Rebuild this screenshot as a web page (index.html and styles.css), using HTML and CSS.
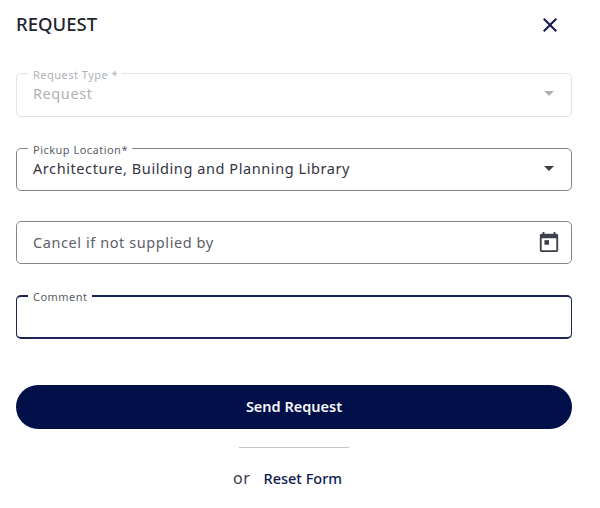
FILE: index.html
```html
<!DOCTYPE html>
<html lang="en">
<head>
<meta charset="utf-8">
<title>Request</title>
<link rel="stylesheet" href="styles.css">
</head>
<body>
<main class="panel">
  <header class="head">
    <h1 class="title">REQUEST</h1>
    <button class="close" aria-label="Close">
      <svg viewBox="0 0 24 24" width="24" height="24"><path d="M19 6.41 17.59 5 12 10.59 6.41 5 5 6.41 10.59 12 5 17.59 6.41 19 12 13.41 17.59 19 19 17.59 13.41 12z"/></svg>
    </button>
  </header>
  <form class="form">
    <fieldset class="field disabled">
      <legend class="label">Request Type *</legend>
      <div class="row"><span class="value">Request</span><span class="caret"></span></div>
    </fieldset>
    <fieldset class="field pickup">
      <legend class="label">Pickup Location*</legend>
      <div class="row"><span class="value">Architecture, Building and Planning Library</span><span class="caret"></span></div>
    </fieldset>
    <div class="field plain">
      <div class="row"><span class="value muted">Cancel if not supplied by</span>
        <svg class="cal" viewBox="0 0 24 24" width="24" height="24"><path d="M20 3h-1V1h-2v2H7V1H5v2H4c-1.1 0-2 .9-2 2v16c0 1.1.9 2 2 2h16c1.100 0 2-.9 2-2V5c0-1.100-.9-2-2-2zm0 18H4V8h16v13z"/><path d="M7 10h5v5H7z"/></svg>
      </div>
    </div>
    <fieldset class="field focus">
      <legend class="label">Comment</legend>
    </fieldset>
    <button type="button" class="send">Send Request</button>
  </form>
  <hr class="rule">
  <p class="alt"><span class="or">or</span><a class="reset">Reset Form</a></p>
</main>
</body>
</html>
```

FILE: styles.css
```css
* { box-sizing: border-box; }
html, body { margin: 0; background: #fff; }
body { font-family: "Noto Sans", "Open Sans", sans-serif; color: #2b2d3a; }
.panel { width: 600px; height: 508px; padding: 12px 28px 0 16px; }
.head { display: flex; justify-content: space-between; align-items: center; height: 24px; }
.title { margin: 0; font-size: 18.5px; line-height: 24px; font-weight: 500; color: #23252f; }
.close { width: 24px; height: 24px; padding: 0; margin: 2px 10px 0 0; border: 0; background: none; display: block; }
.close svg { display: block; fill: #11194f; }
.form { display: flex; flex-direction: column; margin-top: 32px; }
.field { display: block; width: 556px; min-width: 0; margin: 0; padding: 0 16px; border: 1px solid #84858c; border-radius: 5px; height: 49px; }
.label { margin-left: -5px; padding: 0 4px 0 5px; font-size: 11px; line-height: 11px; letter-spacing: .48px; color: #5c5e69; transform: translateY(1px); }
.row { display: flex; align-items: center; justify-content: space-between; height: 30px; margin-top: -1px; }
.value { font-size: 14.5px; letter-spacing: .58px; color: #33353f; }
.muted { color: #5c5e69; }
.caret { width: 0; height: 0; margin-right: 1px; border-left: 5px solid transparent; border-right: 5px solid transparent; border-top: 5px solid #3a3c46; }
.disabled { border-color: #e2e2e4; margin-bottom: 26px; }
.disabled .label, .disabled .value { color: #b0b1b6; }
.disabled .caret { border-top-color: #b0b1b6; }
.pickup { margin-bottom: 30px; height: 48px; }
.plain { height: 43px; margin-bottom: 26px; }
.plain .row { height: 41px; margin-top: -1px; }
.cal { width: 22px; height: 22px; margin-right: -5px; fill: #3d3f4a; }
.focus { border-color: #1c2357; border-width: 2px 1px; }
.send { margin-top: 46px; width: 556px; height: 44px; padding-bottom: 4px; border: 0; border-radius: 22px; background: #02104a; color: #f4f5f8; font: 600 14.5px "Noto Sans", "Open Sans", sans-serif; }
.rule { width: 110px; margin: 18px 0 0 223px; border: 0; border-top: 1px solid #c4c5c9; }
.alt { margin: 18px 0 0 217px; display: flex; align-items: center; gap: 13px; height: 24px; }
.or { font-size: 16px; letter-spacing: .6px; color: #3c3e48; }
.reset { font-size: 14.5px; font-weight: 500; color: #0f1a4e; }
```
